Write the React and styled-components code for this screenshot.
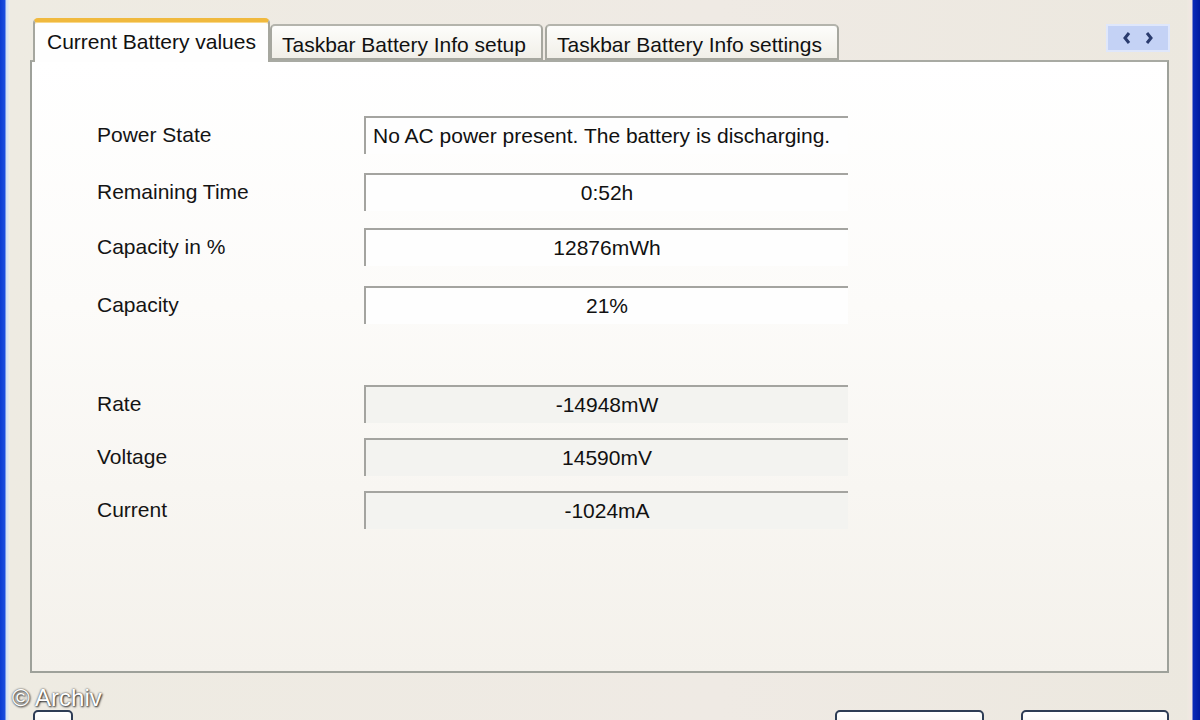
import React from "react";
import styled, { createGlobalStyle } from "styled-components";

const GlobalStyle = createGlobalStyle`
    html, body {
        margin: 0;
        padding: 0;
        background: #ece9d8;
    }
    body {
        font-family: "Liberation Sans", Arial, sans-serif;
    }
`;

const rows = [
    { label: "Power State", value: "No AC power present. The battery is discharging.", left: true, top: 0 },
    { label: "Remaining Time", value: "0:52h", top: 19 },
    { label: "Capacity in %", value: "12876mWh", top: 17 },
    { label: "Capacity", value: "21%", top: 20 },
    { label: "Rate", value: "-14948mW", top: 61, grey: true },
    { label: "Voltage", value: "14590mV", top: 15, grey: true },
    { label: "Current", value: "-1024mA", top: 15, grey: true },
];

const tabs = [
    { title: "Current Battery values", width: 237, active: true },
    { title: "Taskbar Battery Info setup", width: 273 },
    { title: "Taskbar Battery Info settings", width: 294 },
];

const App = () => {
    return (
        <S.Window>
            <GlobalStyle />
            <S.FrameLeft />
            <S.Body>
                <S.TabRow>
                    {tabs.map((t) => (
                        <S.Tab key={t.title} $active={t.active} $width={t.width}>
                            {t.title}
                        </S.Tab>
                    ))}
                    <S.Scroller>
                        <S.Arrow viewBox="0 0 10 14">
                            <path d="M7 2 L3 7 L7 12" />
                        </S.Arrow>
                        <S.Arrow viewBox="0 0 10 14">
                            <path d="M3 2 L7 7 L3 12" />
                        </S.Arrow>
                    </S.Scroller>
                </S.TabRow>
                <S.Panel>
                    {rows.map((r) => (
                        <S.Row key={r.label} $top={r.top}>
                            <S.Label>{r.label}</S.Label>
                            <S.Field $left={r.left} $grey={r.grey}>
                                {r.value}
                            </S.Field>
                        </S.Row>
                    ))}
                </S.Panel>
                <S.Footer>
                    <S.Button $width={40} />
                    <S.Spacer />
                    <S.Button $width={149}>Close</S.Button>
                    <S.Button $width={148}>Help</S.Button>
                </S.Footer>
            </S.Body>
            <S.FrameRight />
            <S.Watermark>© Archiv</S.Watermark>
        </S.Window>
    );
};

export default App;

const Window = styled.div`
    position: relative;
    width: 1200px;
    height: 720px;
    overflow: hidden;
    display: flex;
    background: linear-gradient(90deg, #eeebe2 0%, #efeae4 60%, #ece8df 100%);
`;

const FrameLeft = styled.div`
    width: 10px;
    flex: none;
    background: linear-gradient(90deg, #0a3bd0 0px, #1c4fe0 5px, #cfe0f5 6px, #f1eee6 10px);
`;

const FrameRight = styled.div`
    width: 13px;
    flex: none;
    background: linear-gradient(90deg, #ede9e0 0px, #f3e6e4 5px, #0b2ab8 6px, #0019a0 13px);
`;

const Body = styled.div`
    flex: 1;
    min-width: 0;
    display: flex;
    flex-direction: column;
    padding-left: 20px;
    padding-right: 18px;
`;

const TabRow = styled.div`
    flex: none;
    height: 60px;
    display: flex;
    align-items: flex-end;
    padding-left: 3px;
    position: relative;
    z-index: 1;
`;

const Tab = styled.div`
    box-sizing: border-box;
    width: ${(p) => p.$width}px;
    height: ${(p) => (p.$active ? 44 : 36)}px;
    margin-bottom: ${(p) => (p.$active ? -2 : 0)}px;
    margin-right: ${(p) => (p.$active ? 0 : 2)}px;
    padding: ${(p) => (p.$active ? "8px 0 0 12px" : "7px 0 0 10px")};
    font-size: 21px;
    color: #111;
    white-space: nowrap;
    background: ${(p) => (p.$active ? "#fefefe" : "linear-gradient(#fdfdfb, #f1efe8)")};
    border: 2px solid #a6a79f;
    border-bottom: ${(p) => (p.$active ? "none" : "2px solid #a6a79f")};
    border-top: ${(p) => (p.$active ? "4px solid #f0b93e" : "2px solid #b4b4ac")};
    border-radius: 5px 5px 0 0;
    box-shadow: ${(p) => (p.$active ? "inset 0 1px 0 #f9d88a" : "none")};
`;

const Scroller = styled.div`
    margin-left: auto;
    margin-right: -1px;
    align-self: flex-start;
    margin-top: 24px;
    width: 64px;
    height: 28px;
    box-sizing: border-box;
    display: flex;
    align-items: center;
    justify-content: center;
    gap: 12px;
    background: #c4d2f5;
    border: 2px solid #dfe7fb;
`;

const Arrow = styled.svg`
    width: 10px;
    height: 14px;
    fill: none;
    stroke: #2a3b6e;
    stroke-width: 3;
`;

const Panel = styled.div`
    flex: none;
    height: 613px;
    box-sizing: border-box;
    border: 2px solid #9ea19a;
    border-top-color: #a8aaa3;
    background: linear-gradient(#ffffff 0%, #fcfbf9 40%, #f4f1eb 100%);
    padding: 54px 0 0 65px;
    display: flex;
    flex-direction: column;
`;

const Row = styled.div`
    display: flex;
    align-items: center;
    height: 38px;
    margin-top: ${(p) => p.$top}px;
`;

const Label = styled.div`
    width: 267px;
    font-size: 21px;
    color: #141414;
`;

const Field = styled.div`
    box-sizing: border-box;
    width: 484px;
    height: 38px;
    border-top: 2px solid #a4a4a0;
    border-left: 2px solid #a4a4a0;
    background: ${(p) => (p.$grey ? "#f3f3f0" : "#fefefe")};
    display: flex;
    align-items: center;
    justify-content: ${(p) => (p.$left ? "flex-start" : "center")};
    padding-left: ${(p) => (p.$left ? 7 : 0)}px;
    font-size: 21px;
    color: #111;
    white-space: nowrap;
`;

const Footer = styled.div`
    flex: none;
    display: flex;
    align-items: flex-start;
    padding-top: 37px;
    padding-left: 3px;
    gap: 37px;
`;

const Spacer = styled.div`
    flex: 1;
`;

const Button = styled.div`
    width: ${(p) => p.$width}px;
    height: 30px;
    flex: none;
    box-sizing: border-box;
    border: 2px solid #2d3c55;
    border-radius: 5px;
    background: linear-gradient(#ffffff, #ecebe6);
    font-size: 21px;
    color: #111;
    text-align: center;
    padding-top: 4px;
`;

const Watermark = styled.div`
    position: absolute;
    left: 12px;
    top: 684px;
    font-size: 24px;
    color: #ffffff;
    text-shadow: 0 0 2px #333, 1px 1px 2px #333;
`;

const S = {
    Window,
    FrameLeft,
    FrameRight,
    Body,
    TabRow,
    Tab,
    Scroller,
    Arrow,
    Panel,
    Row,
    Label,
    Field,
    Footer,
    Spacer,
    Button,
    Watermark,
};
